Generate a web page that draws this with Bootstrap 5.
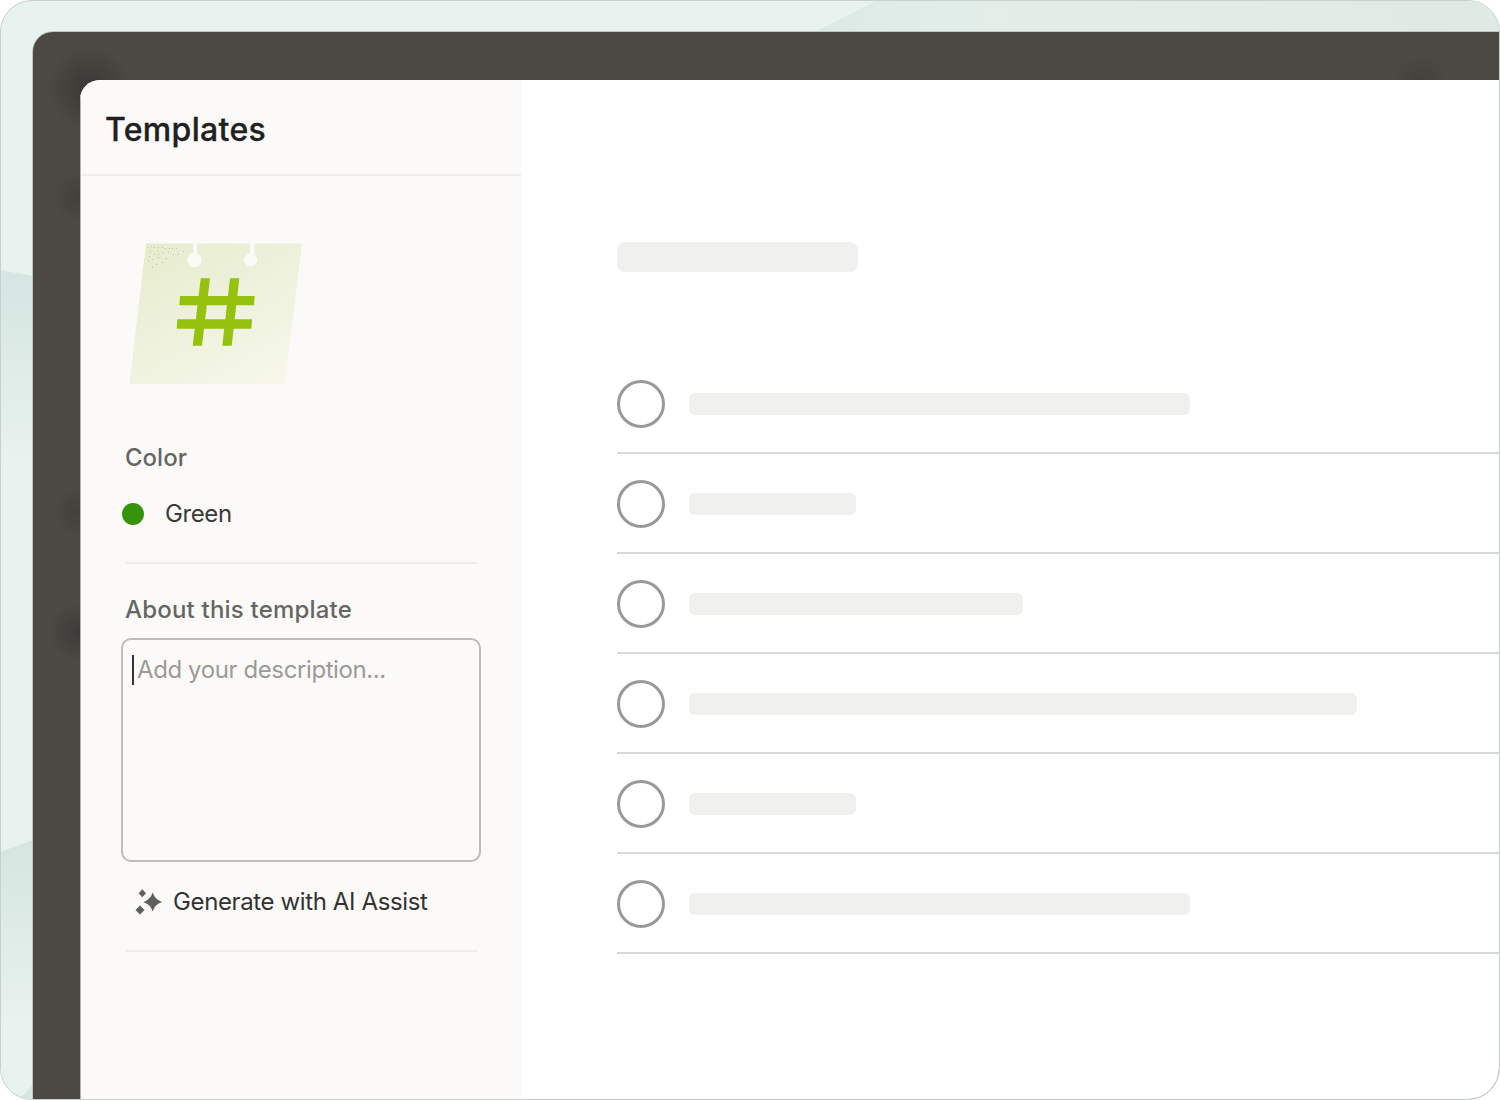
<!DOCTYPE html>
<html lang="en">
<head>
    <meta charset="UTF-8">
    <meta name="viewport" content="width=device-width, initial-scale=1.0">
    <title>Templates</title>
    <link href="https://cdn.jsdelivr.net/npm/bootstrap@5.3.2/dist/css/bootstrap.min.css" rel="stylesheet">
    <style>
        html, body { height: 100%; background: #fff; overflow: hidden; }
        body { font-family: "Inter", "Liberation Sans", sans-serif; }
        .stage {
            position: relative;
            width: 1500px;
            height: 1100px;
            padding: 31px 0 0 32px;
            border-radius: 32px;
            border: 1px solid #c6d0cc;
            background: #e8f2ee;
            overflow: hidden;
        }
        .stage-bg { position: absolute; left: -1px; top: -1px; }
        .app-window {
            position: relative;
            height: 100%;
            padding: 48px 0 0 47px;
            border-radius: 20px 0 0 0;
            background-color: #4c4944;
            box-shadow: 0 0 0 1px #bcc8c3;
            background-image:
                radial-gradient(circle at 56px 56px, #3a3835 0, rgba(58,56,53,0) 42px),
                radial-gradient(circle at 46px 165px, #41403c 0, rgba(65,64,60,0) 26px),
                radial-gradient(circle at 46px 480px, #41403c 0, rgba(65,64,60,0) 26px),
                radial-gradient(circle at 46px 600px, #3e3c39 0, rgba(62,60,57,0) 30px),
                radial-gradient(circle at 1388px 50px, #43413d 0, rgba(67,65,61,0) 28px);
        }
        .app-body {
            height: 100%;
            border-radius: 20px 0 0 0;
            overflow: hidden;
            background: #fff;
        }
        .side-panel {
            width: 441px;
            flex: none;
            background: #fbfaf8;
            border-left: 1px solid #b5b4b1;
        }
        .side-head {
            height: 96px;
            padding: 29px 0 0 24px;
            border-bottom: 2px solid #eeedeb;
        }
        .side-title {
            margin: 0;
            font-size: 32px;
            line-height: 42px;
            font-weight: 500;
            letter-spacing: .32px;
            -webkit-text-stroke: .3px #202020;
            color: #202020;
        }
        .side-body { padding: 67px 44px 0 44px; }
        .tpl-art { display: block; margin: 0 0 0 4px; }
        .field-label {
            font-size: 24px;
            line-height: 32px;
            font-weight: 500;
            color: #666664;
        }
        .field-about { letter-spacing: .2px; }
        .color-dot {
            width: 22px;
            height: 22px;
            border-radius: 50%;
            margin-left: -3px;
            background: #36940a;
        }
        .color-name { font-size: 24px; line-height: 32px; color: #3a3a38; margin-left: 21px; letter-spacing: -.4px; }
        .side-rule { height: 2px; background: #eeedeb; }
        .desc-box { position: relative; margin: 12px -4px 0 -4px; }
        .desc-input {
            display: block;
            width: 100%;
            height: 224px;
            padding: 14px 14px;
            resize: none;
            border: 2px solid #bdbcb9;
            border-radius: 10px;
            background: transparent;
            font-size: 24px;
            line-height: 32px;
            letter-spacing: -.4px;
        }
        .desc-input::placeholder { color: #9b9b99; opacity: 1; }
        .desc-caret {
            position: absolute;
            left: 11px;
            top: 17px;
            width: 2px;
            height: 30px;
            background: #333;
        }
        .ai-row { margin: 24px 0 0 9px; font-size: 24px; line-height: 32px; color: #333331; gap: 11px; }
        .ai-text { letter-spacing: -.38px; }
        .main-panel { padding: 162px 0 0 96px; }
        .skel { background: #f0f0ef; border-radius: 6px; }
        .skel-title { width: 241px; height: 30px; margin-bottom: 82px; border-radius: 8px; }
        .task-row { height: 100px; border-bottom: 2px solid #d8d8d7; padding-top: 2px; }
        .task-check {
            width: 48px;
            height: 48px;
            flex: none;
            border-radius: 50%;
            border: 3px solid #999;
        }
        .task-bar { height: 22px; margin-left: 24px; }
    </style>
</head>
<body class="m-0">

<div class="stage">
    <svg class="stage-bg" width="1500" height="1100" viewBox="0 0 1500 1100" aria-hidden="true">
        <defs>
            <linearGradient id="bandTop" x1="0" y1="0" x2="0" y2="1">
                <stop offset="0" stop-color="#d5e5e1"/>
                <stop offset=".55" stop-color="#e8f2ee"/>
                <stop offset="1" stop-color="#e8f2ee"/>
            </linearGradient>
            <linearGradient id="bandLow" x1="0" y1="0" x2="0" y2="1">
                <stop offset="0" stop-color="#d5e5e0"/>
                <stop offset=".75" stop-color="#e8f2ee"/>
                <stop offset="1" stop-color="#e8f2ee"/>
            </linearGradient>
            <linearGradient id="bandRight" x1="0" y1="0" x2="1" y2="0">
                <stop offset="0" stop-color="#dceae5"/>
                <stop offset=".25" stop-color="#e3eee9"/>
                <stop offset="1" stop-color="#dfeae5"/>
            </linearGradient>
        </defs>
        <polygon points="0,270 33,276 33,620 0,620" fill="url(#bandTop)"/>
        <polygon points="0,852 33,840 33,1085 0,1085" fill="url(#bandLow)"/>
        <polygon points="18,1100 33,1085 33,1100" fill="#d6e6e1"/>
        <polygon points="815,32 878,0 1500,0 1500,32" fill="url(#bandRight)"/>
    </svg>

    <div class="app-window">
        <div class="app-body d-flex">
            <!-- panel izquierdo -->
            <aside class="side-panel">
                <div class="side-head">
                    <h1 class="side-title">Templates</h1>
                </div>
                <div class="side-body">
                    <svg class="tpl-art" width="173" height="141" viewBox="129 243 173 141" aria-hidden="true">
                        <defs>
                            <linearGradient id="paper" x1="0.1" y1="0" x2="0.8" y2="1">
                                <stop offset="0" stop-color="#e7ecce"/>
                                <stop offset="1" stop-color="#f6f7ea"/>
                            </linearGradient>
                        </defs>
                        <polygon points="146,243.5 302,243.5 285,384 129.5,384" fill="url(#paper)"/>
                        <g fill="#b9c7a4">
                            <rect x="148" y="247" width="1" height="1"/><rect x="151" y="246" width="1" height="1"/>
                            <rect x="154" y="247" width="1" height="1"/><rect x="158" y="247" width="1" height="1"/>
                            <rect x="162" y="247" width="1" height="1"/><rect x="165" y="248" width="1" height="1"/>
                            <rect x="169" y="248" width="1" height="1"/><rect x="172" y="248" width="1" height="1"/>
                            <rect x="176" y="248" width="1" height="1"/><rect x="150" y="251" width="1" height="1"/>
                            <rect x="157" y="250" width="1" height="1"/><rect x="163" y="252" width="1" height="1"/>
                            <rect x="168" y="252" width="1" height="1"/><rect x="183" y="251" width="1" height="1"/>
                            <rect x="149" y="256" width="1" height="1"/><rect x="154" y="254" width="1" height="1"/>
                            <rect x="158" y="254" width="1" height="1"/><rect x="173" y="254" width="1" height="1"/>
                            <rect x="178" y="254" width="1" height="1"/><rect x="148" y="260" width="1" height="1"/>
                            <rect x="152" y="259" width="1" height="1"/><rect x="158" y="257" width="1" height="1"/>
                            <rect x="166" y="258" width="1" height="1"/><rect x="162" y="262" width="1" height="1"/>
                            <rect x="156" y="264" width="1" height="1"/><rect x="152" y="267" width="1" height="1"/>
                        </g>
                        <g fill="#fbfaf8">
                            <rect x="193.3" y="243" width="4" height="15"/>
                            <rect x="250" y="243" width="4.5" height="15"/>
                            <circle cx="194.5" cy="260" r="7.2"/>
                            <circle cx="250.7" cy="260" r="6.5"/>
                        </g>
                        <g fill="#94c20f">
                            <polygon points="200.7,278.3 210,278.3 202,345.7 192.7,345.7"/>
                            <polygon points="230,278.3 239.3,278.3 231.7,345.7 222.3,345.7"/>
                            <polygon points="180,296 254.7,296 254,305.3 179.3,305.3"/>
                            <polygon points="177.3,319.3 252,319.3 251.3,328.7 176.7,328.7"/>
                        </g>
                    </svg>

                    <div class="field-label" style="margin-top:58px">Color</div>
                    <div class="d-flex align-items-center" style="margin-top:24px">
                        <span class="color-dot"></span>
                        <span class="color-name">Green</span>
                    </div>
                    <div class="side-rule" style="margin-top:32px"></div>

                    <div class="field-label field-about" style="margin-top:30px">About this template</div>
                    <div class="desc-box">
                        <textarea class="desc-input" placeholder="Add your description..." aria-label="Description"></textarea>
                        <span class="desc-caret"></span>
                    </div>

                    <div class="ai-row d-flex align-items-center">
                        <svg width="28" height="28" viewBox="134 888 28 28" aria-hidden="true">
                            <g fill="#5f5f5d">
                                <path d="M152.7 892.5Q155 899.7 162.2 902Q155 904.3 152.7 911.5Q150.4 904.3 143.2 902Q150.4 899.7 152.7 892.5Z"/>
                                <path d="M142.3 889.3L146 893.3L142.3 897.3L138.6 893.3Z"/>
                                <path d="M140 905.5L144.5 910L140 914.5L135.5 910Z"/>
                            </g>
                        </svg>
                        <span class="ai-text">Generate with AI Assist</span>
                    </div>
                    <div class="side-rule" style="margin-top:32px"></div>
                </div>
            </aside>

            <!-- lista -->
            <main class="main-panel flex-grow-1">
                <div class="skel skel-title"></div>
                <div id="taskList"></div>
            </main>
        </div>
    </div>
</div>

<script>
    const barWidths = [501, 167, 334, 668, 167, 501];
    const taskList = document.getElementById("taskList");

    barWidths.forEach(w => {
        const row = document.createElement("div");
        row.className = "task-row d-flex align-items-center";
        row.innerHTML = `<span class="task-check"></span><span class="skel task-bar" style="width:${w}px"></span>`;
        taskList.appendChild(row);
    });
</script>
<script src="https://cdn.jsdelivr.net/npm/bootstrap@5.3.2/dist/js/bootstrap.bundle.min.js"></script>
</body>
</html>
